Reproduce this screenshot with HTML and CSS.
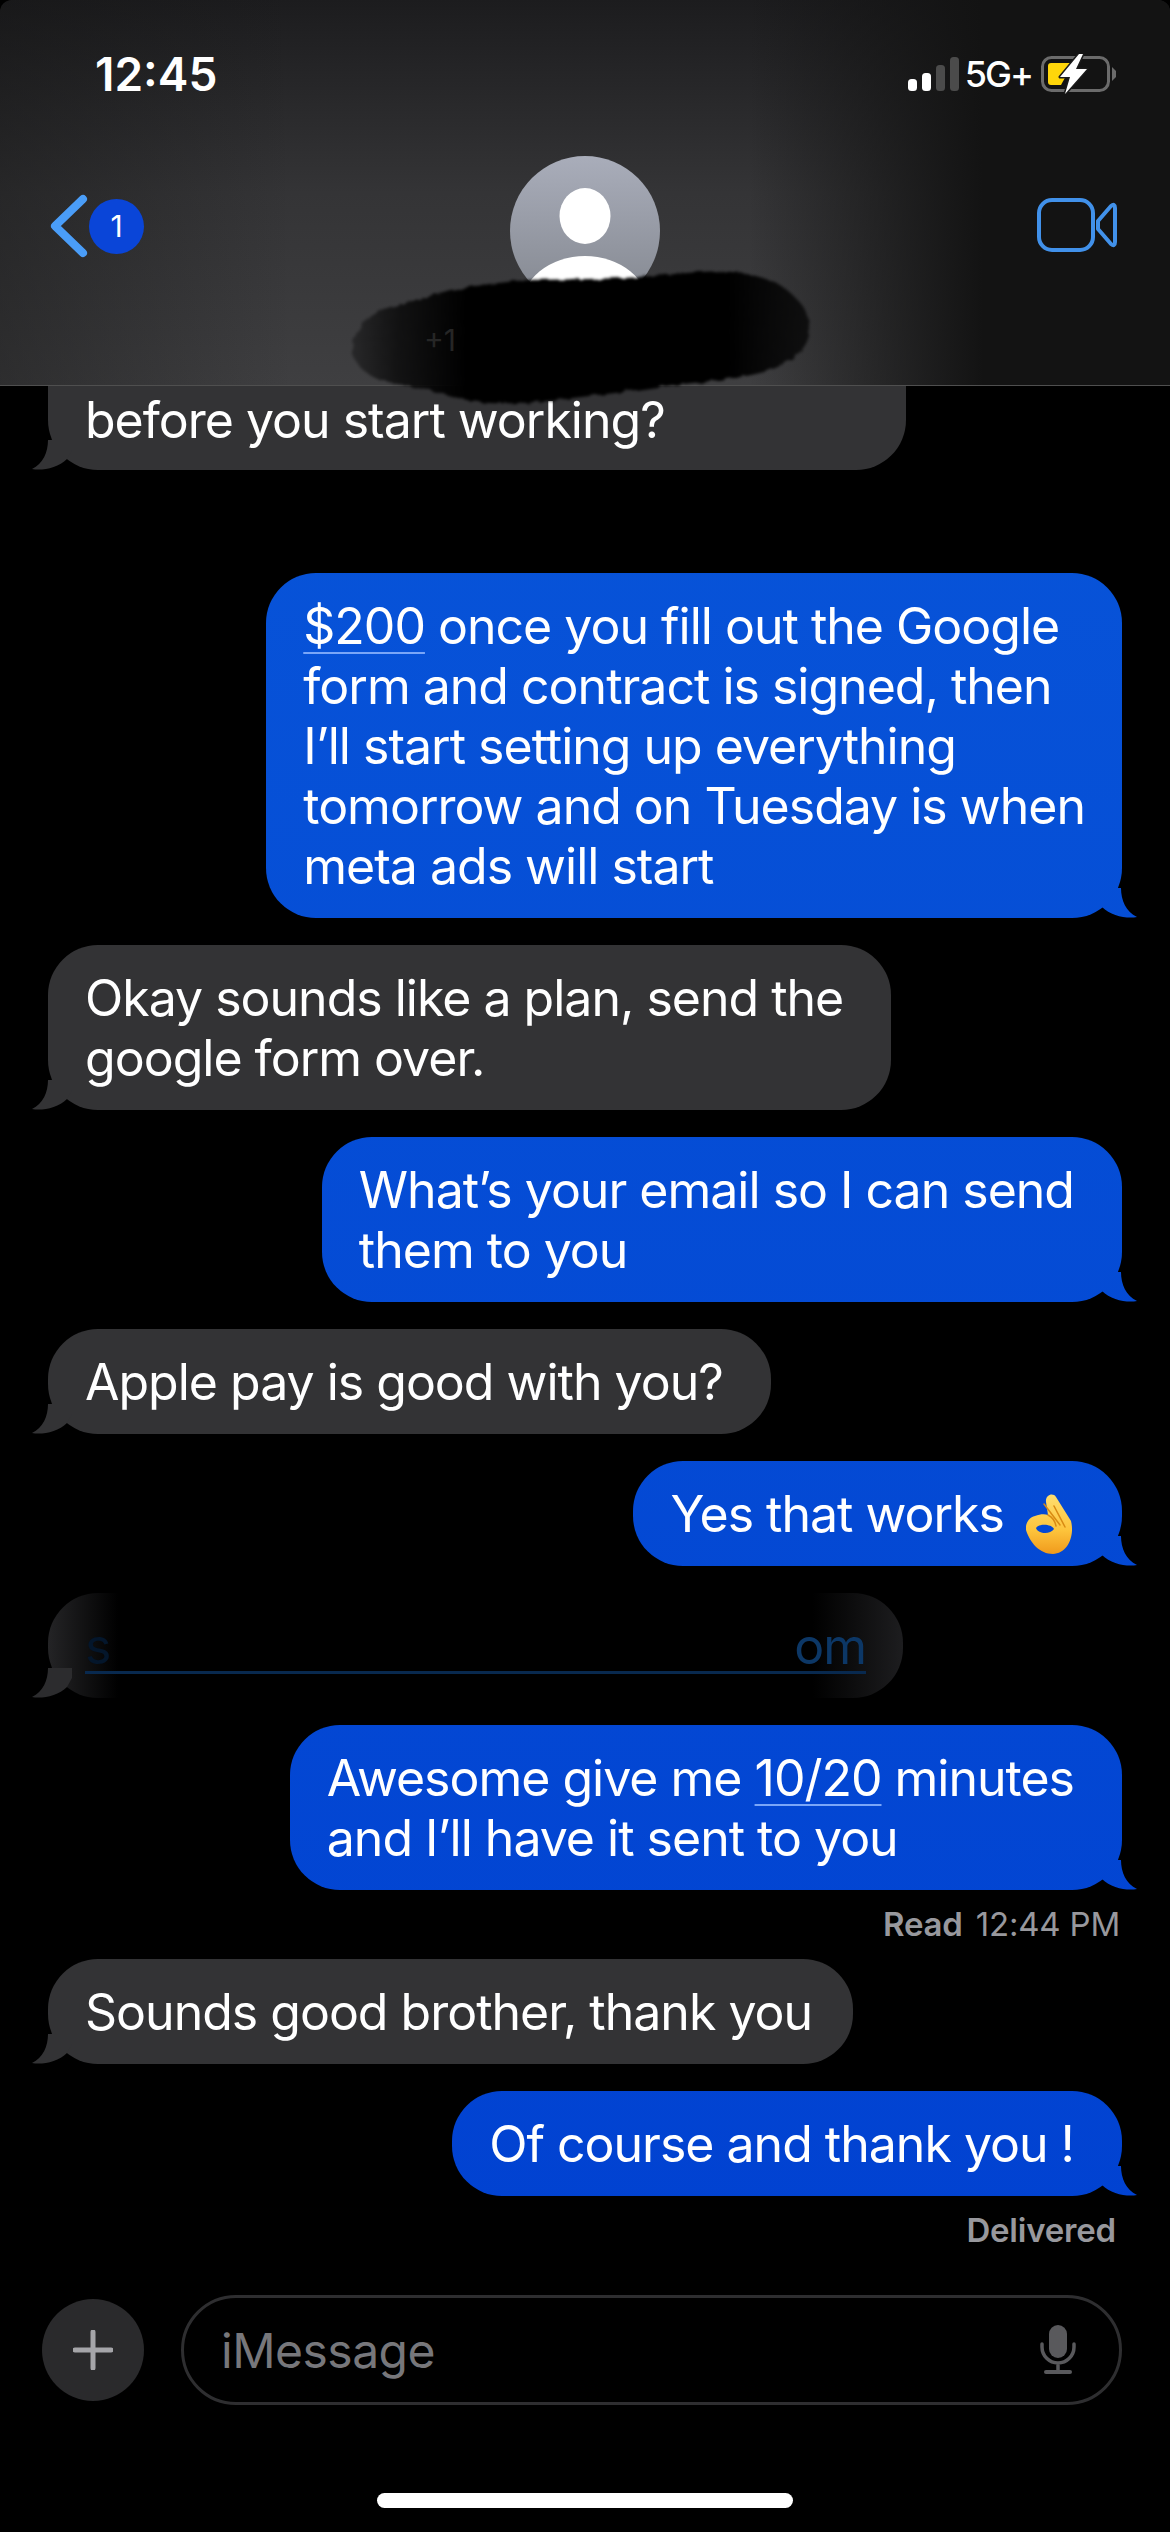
FILE: index.html
```html
<!DOCTYPE html>
<html lang="en">
<head>
    <meta charset="UTF-8">
    <meta name="viewport" content="width=device-width, initial-scale=1.0">
    <title>Messages</title>
    <link rel="stylesheet" href="styles.css">
</head>
<body>
    <div class="phone">
        <!-- Top bar -->
        <header class="header">
            <div class="status-bar">
                <span class="clock">12:45</span>
                <div class="status-icons">
                    <svg class="signal" width="51" height="34" viewBox="0 0 51 34">
                        <rect x="0" y="22" width="9" height="12" rx="3.5" fill="#fff"/>
                        <rect x="14" y="16" width="9" height="18" rx="3.5" fill="#fff"/>
                        <rect x="28" y="8" width="9" height="26" rx="3.5" fill="#4b4b4b"/>
                        <rect x="42" y="0" width="9" height="34" rx="3.5" fill="#4b4b4b"/>
                    </svg>
                    <span class="network">5G+</span>
                    <svg class="battery" width="76" height="40" viewBox="0 0 76 40">
                        <rect x="1.5" y="3.5" width="66" height="33" rx="9" fill="none" stroke="#6b6b6b" stroke-width="3"/>
                        <path d="M7 12 a3 3 0 0 1 3-3 H32 L20 31 H10 a3 3 0 0 1-3-3 Z" fill="#ffd60a"/>
                        <path d="M38 0 L19 23 H29 L24 40 L46 15 H35 L42 0 Z" fill="#fff" stroke="#1b1b1b" stroke-width="3" paint-order="stroke" stroke-linejoin="round"/>
                        <path d="M71 13 L75 17 V23 L71 27 Z" fill="#6b6b6b"/>
                    </svg>
                </div>
            </div>
            <div class="nav-bar">
                <div class="back">
                    <svg width="38" height="64" viewBox="0 0 38 64">
                        <path d="M33 5 L5 32 L33 59" fill="none" stroke="#4a9df8" stroke-width="8" stroke-linecap="round" stroke-linejoin="round"/>
                    </svg>
                    <span class="badge">1</span>
                </div>
                <svg class="avatar" width="150" height="150" viewBox="0 0 150 150">
                    <defs>
                        <linearGradient id="avatarFill" x1="0" y1="0" x2="0" y2="1">
                            <stop offset="0" stop-color="#a9adba"/>
                            <stop offset="1" stop-color="#83878f"/>
                        </linearGradient>
                        <clipPath id="avatarClip"><circle cx="75" cy="75" r="75"/></clipPath>
                    </defs>
                    <circle cx="75" cy="75" r="75" fill="url(#avatarFill)"/>
                    <g clip-path="url(#avatarClip)" fill="#fff">
                        <ellipse cx="75" cy="60" rx="25.5" ry="28"/>
                        <ellipse cx="75" cy="152" rx="64" ry="52"/>
                    </g>
                </svg>
                <svg class="video" width="80" height="54" viewBox="0 0 80 54">
                    <rect x="2" y="2" width="54" height="50" rx="13" fill="none" stroke="#4191ea" stroke-width="4"/>
                    <path d="M61 23 L74 8 Q78 5 78 10 V44 Q78 49 74 46 L61 31 Z" fill="none" stroke="#4191ea" stroke-width="4" stroke-linejoin="round"/>
                </svg>
            </div>
        </header>

        <!-- Messages -->
        <main class="thread">
            <div class="bubble in cut">before you start working?</div>
            <div class="bubble out first-out"><span class="link">$200</span> once you fill out the Google<br>form and contract is signed, then<br>I’ll start setting up everything<br>tomorrow and on Tuesday is when<br>meta ads will start</div>
            <div class="bubble in">Okay sounds like a plan, send the<br>google form over.</div>
            <div class="bubble out">What’s your email so I can send<br>them to you</div>
            <div class="bubble in">Apple pay is good with you?</div>
            <div class="bubble out emoji-row">Yes that works
                <svg class="ok-hand" width="48" height="62" viewBox="0 0 48 62">
                    <defs>
                        <linearGradient id="okFill" x1="0" y1="0" x2="0" y2="1">
                            <stop offset="0" stop-color="#ffdf70"/>
                            <stop offset="0.6" stop-color="#fdc43c"/>
                            <stop offset="1" stop-color="#f09a1c"/>
                        </linearGradient>
                    </defs>
                    <path fill-rule="evenodd" fill="url(#okFill)" d="M20 9 C19 2 27 -1 30 4 L45 28 C49 44 41 61 27 61 C14 61 4 50 0 37 C-1 31 3 24 9 23 C14 21 19 21 22 22 Z M10 35 C12 41 24 42 28 36 C26 31 13 30 10 35 Z"/>
                    <path d="M22 22 C26 24 29 28 30 33 M28 13 L39 34 M18 11 L34 32" fill="none" stroke="#d98a12" stroke-width="1.5" stroke-linecap="round"/>
                </svg>
            </div>
            <div class="bubble in hidden-mail">
                <span class="mail-link"><span>s</span><span class="mail-end">om</span></span>
            </div>
            <div class="bubble out">Awesome give me <span class="link">10/20</span> minutes<br>and I’ll have it sent to you</div>
            <div class="receipt"><b>Read</b> 12:44 PM</div>
            <div class="bubble in tight">Sounds good brother, thank you</div>
            <div class="bubble out">Of course and thank you !</div>
            <div class="receipt"><b>Delivered</b></div>
        </main>

        <!-- Input row -->
        <footer class="composer">
            <div class="plus">
                <svg width="40" height="40" viewBox="0 0 40 40">
                    <path d="M20 2 V38 M2 20 H38" stroke="#a5a5a9" stroke-width="5" stroke-linecap="round"/>
                </svg>
            </div>
            <div class="input">
                <span class="placeholder">iMessage</span>
                <svg width="36" height="50" viewBox="0 0 36 50">
                    <rect x="9" y="0" width="18" height="33" rx="9" fill="#59595c"/>
                    <path d="M2 19 V22 a16 16 0 0 0 32 0 V19 M18 38 V47" fill="none" stroke="#59595c" stroke-width="3.5" stroke-linecap="round"/>
                    <path d="M6 47 H30" stroke="#59595c" stroke-width="4" stroke-linecap="round"/>
                </svg>
            </div>
        </footer>
        <div class="home-bar"></div>

        <!-- Scribbled out contact name -->
        <svg class="scribble" width="490" height="160" viewBox="0 0 490 160">
            <defs>
                <linearGradient id="inkFill" x1="0" y1="0" x2="1" y2="0">
                    <stop offset="0" stop-color="#000" stop-opacity="0.35"/>
                    <stop offset="0.1" stop-color="#000" stop-opacity="0.7"/>
                    <stop offset="0.25" stop-color="#000"/>
                    <stop offset="0.82" stop-color="#000"/>
                    <stop offset="1" stop-color="#000" stop-opacity="0.7"/>
                </linearGradient>
                <filter id="rough" x="-5%" y="-10%" width="110%" height="120%">
                    <feTurbulence type="fractalNoise" baseFrequency="0.12" numOctaves="2" seed="4"/>
                    <feDisplacementMap in="SourceGraphic" scale="5"/>
                    <feGaussianBlur stdDeviation="1.5"/>
                </filter>
            </defs>
            <path filter="url(#rough)" fill="url(#inkFill)" d="M12 87 C16 68 28 54 40 50 C60 44 90 36 110 30 C140 25 160 22 190 20 C230 19 270 19 300 17 C330 15 370 9 393 12 C420 15 435 22 443 27 C458 38 470 52 470 67 C470 82 462 92 450 100 C435 110 420 114 400 117 C370 122 345 123 317 127 C290 131 260 135 233 138 C205 142 175 144 150 143 C130 142 115 137 100 133 C80 128 60 125 40 120 C28 115 12 105 12 87 Z"/>
        </svg>
        <span class="phone-hint">+1</span>
    </div>
</body>
</html>
```

FILE: styles.css
```css
/* General Styles */
* {
    box-sizing: border-box;
}
body {
    margin: 0;
    padding: 0;
    background: #000;
    font-family: 'Inter', 'Liberation Sans', sans-serif;
    color: #fff;
}
.phone {
    position: relative;
    width: 1170px;
    height: 2532px;
    display: flex;
    flex-direction: column;
    overflow: hidden;
    background: #000;
    border-radius: 12px;
}

/* Top bar */
.header {
    height: 386px;
    flex-shrink: 0;
    padding: 0 53px 0 50px;
    border-bottom: 1px solid #4f4f4f;
    background:
        linear-gradient(90deg, rgba(19, 19, 19, 0.4), rgba(19, 19, 19, 0) 25%, rgba(19, 19, 19, 0) 64%, #131313 84%),
        linear-gradient(180deg, #1c1c1e, #343436 50%, #3f3f41);
}
.status-bar {
    height: 148px;
    padding: 54px 0 0 45px;
    display: flex;
    justify-content: space-between;
    align-items: flex-start;
}
.clock {
    font-size: 46px;
    line-height: 40px;
    font-weight: 600;
}
.status-icons {
    display: flex;
    align-items: center;
}
.signal {
    margin-right: 6px;
}
.network {
    font-size: 36px;
    line-height: 40px;
    font-weight: 500;
    letter-spacing: -2px;
    margin-right: 9px;
}
.nav-bar {
    display: flex;
    justify-content: space-between;
    align-items: flex-start;
}
.back {
    display: flex;
    align-items: center;
    gap: 1px;
    margin-top: 46px;
}
.badge {
    width: 55px;
    height: 55px;
    border-radius: 50%;
    background: #0a45d8;
    font-size: 30px;
    line-height: 55px;
    text-align: center;
}
.avatar {
    margin-top: 8px;
    margin-left: -12px;
}
.video {
    margin-top: 50px;
}

/* Messages */
.thread {
    flex: 1;
    min-height: 0;
    display: flex;
    flex-direction: column;
    overflow: hidden;
}
.bubble {
    position: relative;
    margin-top: 27px;
    padding: 22.5px 48px 22.5px 37px;
    border-radius: 50px;
    font-size: 50px;
    line-height: 60px;
    letter-spacing: -1px;
    white-space: nowrap;
}
.bubble::after {
    content: "";
    position: absolute;
    bottom: 0;
    width: 40px;
    height: 30px;
    background: inherit;
}
.in {
    align-self: flex-start;
    margin-left: 48px;
    background: #333335;
}
.in::after {
    left: -16px;
    clip-path: path("M16 0 C16 12 11 24 0 29 C10 31 26 28 35 19 L40 10 L40 0 Z");
}
.out {
    align-self: flex-end;
    margin-right: 48px;
    background: linear-gradient(180deg, #0958da, #003fd0) fixed;
}
.out::after {
    right: -15px;
    clip-path: path("M24 0 C24 12 29 24 40 29 C30 31 14 28 5 19 L0 10 L0 0 Z");
}
.tight {
    padding-right: 41px;
}
.cut {
    margin-top: 0;
    padding-top: 4px;
    padding-bottom: 20px;
    border-radius: 0 0 50px 50px;
    width: 858px;
}
.first-out {
    margin-top: 103px;
    padding-right: 37px;
}
.link {
    text-decoration: underline;
    text-decoration-color: #7aa6f8;
    text-decoration-thickness: 2px;
    text-underline-offset: 8px;
}
.emoji-row {
    height: 105px;
}
.ok-hand {
    vertical-align: -13px;
    margin: -10px 0 -10px 9px;
}
.hidden-mail {
    width: 855px;
    padding-right: 37px;
    background: linear-gradient(90deg, #242426, #000 70px, #000 calc(100% - 90px), #1d1d1f);
}
.hidden-mail::after {
    background: #2c2c2e;
}
.mail-link {
    display: flex;
    justify-content: space-between;
    border-bottom: 3px solid #08294f;
    height: 58px;
    margin-bottom: 2px;
    color: #04162b;
}
.mail-end {
    color: #0c3766;
}
.receipt {
    align-self: flex-end;
    margin: 15px 50px 0 0;
    height: 38px;
    font-size: 33px;
    line-height: 38px;
    letter-spacing: -0.2px;
    color: #98989d;
}
.receipt b {
    font-weight: 600;
    margin-right: 4px;
}
.receipt + .bubble {
    margin-top: 16px;
}

/* Input row */
.composer {
    flex-shrink: 0;
    height: 110px;
    padding: 0 48px 0 42px;
    display: flex;
    align-items: center;
    gap: 37px;
}
.plus {
    width: 102px;
    height: 102px;
    border-radius: 50%;
    background: #2a2a2c;
    display: flex;
    justify-content: center;
    align-items: center;
    flex-shrink: 0;
}
.input {
    flex: 1;
    height: 110px;
    padding: 0 43px 0 37px;
    border: 3px solid #2e2e30;
    border-radius: 55px;
    display: flex;
    justify-content: space-between;
    align-items: center;
}
.placeholder {
    font-size: 48px;
    letter-spacing: -0.5px;
    color: #77777b;
}
.home-bar {
    flex-shrink: 0;
    width: 416px;
    height: 15px;
    margin: 88px auto 24px;
    border-radius: 8px;
    background: #fff;
}

/* Scribble over the contact name */
.scribble {
    position: absolute;
    left: 340px;
    top: 260px;
}
.phone-hint {
    position: absolute;
    left: 424px;
    top: 322px;
    font-size: 30px;
    line-height: 36px;
    color: #262626;
}
```
